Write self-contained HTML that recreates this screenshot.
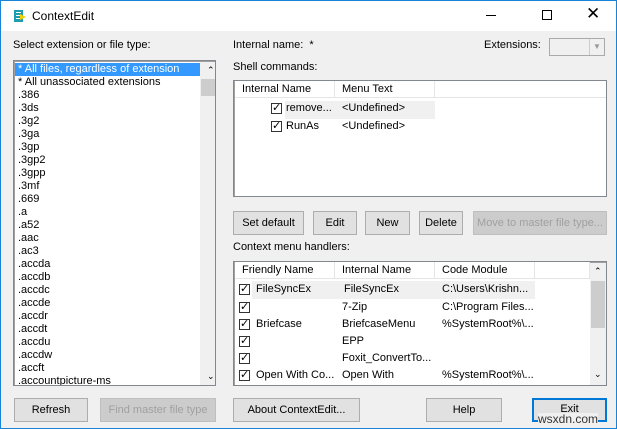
<!DOCTYPE html>
<html><head><style>
*{box-sizing:border-box;margin:0;padding:0}
body{width:617px;height:429px;overflow:hidden;font-family:"Liberation Sans",sans-serif;font-size:11px;color:#000;background:#f0f0f0;position:relative}
.win{position:absolute;left:0;top:0;width:617px;height:429px;border:1px solid #1883d7;background:#f0f0f0}
.title{position:absolute;left:0;top:0;width:615px;height:30px;background:#fff}
.a{position:absolute;white-space:nowrap}
.btn{position:absolute;border:1px solid #adadad;background:#e1e1e1;text-align:center;line-height:22px;height:24px}
.dis{color:#a0a0a0;border-color:#bfbfbf;background:#cccccc}
.box{position:absolute;background:#fff;border:1px solid #828790;box-shadow:inset 1px 1px 0 #a0a0a0}
.hd{position:absolute;top:0;height:17px;border-right:1px solid #e5e5e5;border-bottom:1px solid #e5e5e5;padding-left:7px;line-height:16px;background:#fff}
.cb{position:absolute;width:11px;height:11px;border:1px solid #333;font-size:11px;line-height:9px;text-align:center;background:#fff}
.cb:after{content:"✓";font-size:11px}
.sb{position:absolute;background:#f0f0f0}
.li div{height:13px;line-height:13px;padding-left:3px}
</style></head><body><div class="win">
<div class="title">
<svg class="a" style="left:12px;top:8px" width="14" height="14"><rect x="1" y="1" width="9" height="12" fill="#1e9cb0"/><rect x="3" y="3" width="5" height="1" fill="#fff"/><rect x="3" y="6" width="5" height="1" fill="#fff"/><rect x="3" y="9" width="5" height="1" fill="#fff"/><path d="M7 5l6 3-6 3z" fill="#f2d000"/></svg>
<div class="a" style="left:31px;top:8px;font-size:12px">ContextEdit</div>
<div class="a" style="left:485px;top:14px;width:10px;height:1px;background:#000"></div>
<div class="a" style="left:541px;top:9px;width:10px;height:10px;border:1px solid #000"></div>
<div class="a" style="left:585px;top:3px;font-size:17px">✕</div>
</div>
<div class="a" style="left:12px;top:38px">Select extension or file type:</div>
<div class="box li" style="left:12px;top:59px;width:203px;height:326px;padding:1px 1px 1px 1px;padding-top:2px;overflow:hidden">
<div style="background:#3399ff;color:#fff;width:185px">* All files, regardless of extension</div>
<div>* All unassociated extensions</div><div>.386</div><div>.3ds</div><div>.3g2</div><div>.3ga</div><div>.3gp</div><div>.3gp2</div><div>.3gpp</div><div>.3mf</div><div>.669</div><div>.a</div><div>.a52</div><div>.aac</div><div>.ac3</div><div>.accda</div><div>.accdb</div><div>.accdc</div><div>.accde</div><div>.accdr</div><div>.accdt</div><div>.accdu</div><div>.accdw</div><div>.accft</div><div>.accountpicture-ms</div>
<div class="sb" style="left:186px;top:1px;width:16px;height:324px;position:absolute"><div class="a" style="left:4px;top:2px;font-size:9px">⌃</div><div class="a" style="left:1px;top:17px;width:14px;height:17px;background:#cdcdcd"></div><div class="a" style="left:4px;top:308px;font-size:9px">⌄</div></div>
</div>
<div class="a" style="left:232px;top:38px">Internal name:&nbsp; *</div>
<div class="a" style="left:483px;top:38px">Extensions:</div>
<div class="a" style="left:548px;top:37px;width:56px;height:18px;border:1px solid #aaa;background:#f0f0f0"><div class="a" style="right:0;top:0;width:15px;height:16px;border-left:1px solid #ccc;color:#999;font-size:8px;text-align:center;line-height:16px">▼</div></div>
<div class="a" style="left:232px;top:60px">Shell commands:</div>
<div class="box" style="left:232px;top:79px;width:374px;height:117px">
<div class="hd" style="left:1px;width:100px">Internal Name</div>
<div class="hd" style="left:101px;width:100px">Menu Text</div>
<div class="hd" style="left:201px;width:171px;border-right:0"></div>
<div class="a" style="left:51px;top:20px;width:150px;height:18px;background:#f0f0f0"></div>
<div class="cb" style="left:37px;top:22px"></div><div class="a" style="left:52px;top:21px">remove...</div><div class="a" style="left:108px;top:21px">&lt;Undefined&gt;</div>
<div class="cb" style="left:37px;top:40px"></div><div class="a" style="left:52px;top:39px">RunAs</div><div class="a" style="left:108px;top:39px">&lt;Undefined&gt;</div>
</div>
<div class="btn" style="left:232px;top:210px;width:71px">Set default</div>
<div class="btn" style="left:312px;top:210px;width:44px">Edit</div>
<div class="btn" style="left:364px;top:210px;width:45px">New</div>
<div class="btn" style="left:418px;top:210px;width:44px">Delete</div>
<div class="btn dis" style="left:472px;top:210px;width:134px">Move to master file type...</div>
<div class="a" style="left:232px;top:240px">Context menu handlers:</div>
<div class="box" style="left:232px;top:260px;width:374px;height:125px;overflow:hidden">
<div class="hd" style="left:1px;width:100px">Friendly Name</div>
<div class="hd" style="left:101px;width:100px">Internal Name</div>
<div class="hd" style="left:201px;width:100px">Code Module</div>
<div class="hd" style="left:301px;width:55px"></div>
<div class="a" style="left:18px;top:19px;width:283px;height:18px;background:#f0f0f0"></div>
<div class="cb" style="left:5px;top:22px"></div><div class="a" style="left:22px;top:21px">FileSyncEx</div><div class="a" style="left:110px;top:21px">FileSyncEx</div><div class="a" style="left:208px;top:21px">C:\Users\Krishn...</div>
<div class="cb" style="left:5px;top:40px"></div><div class="a" style="left:108px;top:39px">7-Zip</div><div class="a" style="left:208px;top:39px">C:\Program Files...</div>
<div class="cb" style="left:5px;top:57px"></div><div class="a" style="left:22px;top:56px">Briefcase</div><div class="a" style="left:108px;top:56px">BriefcaseMenu</div><div class="a" style="left:208px;top:56px">%SystemRoot%\...</div>
<div class="cb" style="left:5px;top:74px"></div><div class="a" style="left:108px;top:73px">EPP</div>
<div class="cb" style="left:5px;top:91px"></div><div class="a" style="left:108px;top:90px">Foxit_ConvertTo...</div>
<div class="cb" style="left:5px;top:108px"></div><div class="a" style="left:22px;top:107px">Open With Co...</div><div class="a" style="left:108px;top:107px">Open With</div><div class="a" style="left:208px;top:107px">%SystemRoot%\...</div>
<div class="cb" style="left:5px;top:124px"></div>
<div class="sb" style="left:356px;top:1px;width:16px;height:122px"><div class="a" style="left:4px;top:3px;font-size:9px">⌃</div><div class="a" style="left:1px;top:18px;width:14px;height:47px;background:#cdcdcd"></div><div class="a" style="left:4px;top:106px;font-size:9px">⌄</div></div>
</div>
<div class="btn" style="left:13px;top:397px;width:74px">Refresh</div>
<div class="btn dis" style="left:99px;top:397px;width:116px">Find master file type</div>
<div class="btn" style="left:232px;top:397px;width:127px">About ContextEdit...</div>
<div class="btn" style="left:425px;top:397px;width:76px">Help</div>
<div class="btn" style="left:531px;top:397px;width:75px;border:1px solid #0078d7;box-shadow:inset 0 0 0 1px #0078d7;line-height:20px">Exit</div>
<div class="a" style="left:537px;top:412px;font-size:12px;color:#333;background:#f0f0f0;line-height:12px">wsxdn.com</div>
</div></body></html>
